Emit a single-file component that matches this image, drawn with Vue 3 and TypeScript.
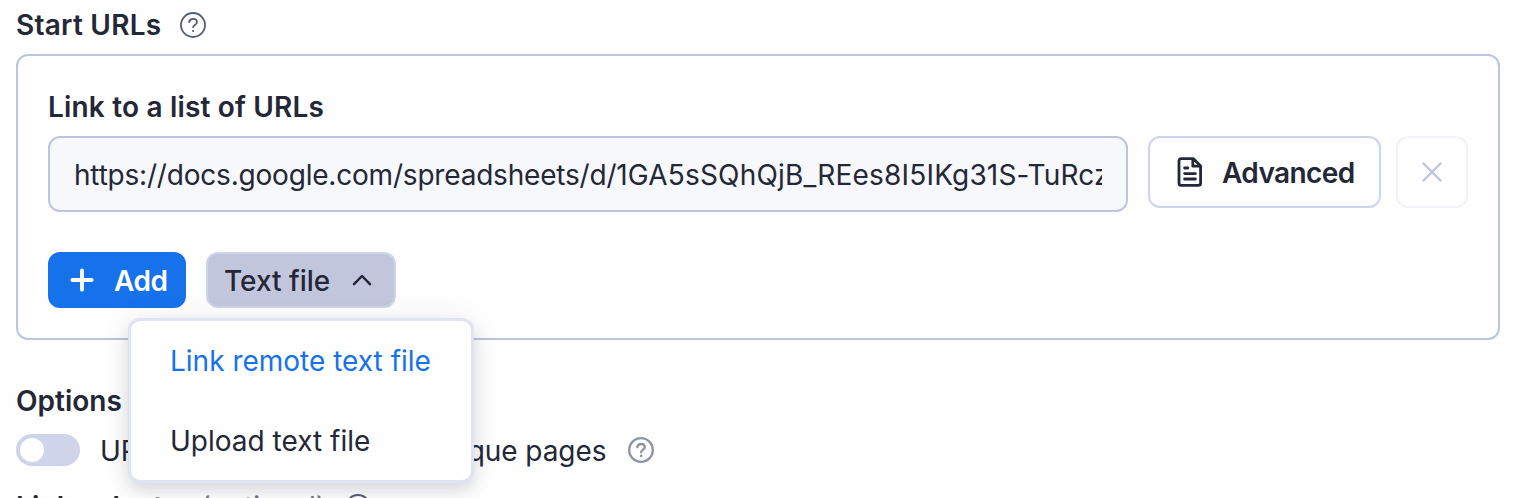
<script setup lang="ts">
import { ref } from 'vue'

const urlBase = 'https://docs.google.com/spreadsheets/d/'
const urlId = '1GA5sSQhQjB_REes8I5IKg31S-TuRczQ4'
const menuOpen = ref(true)
const fragments = ref(false)
const menuItems = [
  { label: 'Link remote text file', active: true },
  { label: 'Upload text file', active: false },
]
</script>

<template>
  <main class="form">
    <div class="heading start">
      <span>Start URLs</span>
      <svg class="help" viewBox="0 0 26 26"><circle cx="13" cy="13" r="12" /><path d="M9.2 10.2C9.5 8 11.1 6.9 13.1 6.9c2.2 0 3.8 1.3 3.8 3.3 0 2.6-3.8 2.8-3.8 5" /><circle class="dot" cx="13.1" cy="19" r="1.1" /></svg>
    </div>

    <section class="card">
      <div class="label">Link to a list of URLs</div>
      <div class="url-row">
        <div class="input"><span class="value"><span class="base">{{ urlBase }}</span><span class="id">{{ urlId }}</span></span></div>
        <button class="btn advanced">
          <svg class="doc" viewBox="0 0 26 32"><path d="M4.2 2.6H16.2l7.4 7.4v17.2a2.2 2.2 0 0 1-2.2 2.2H4.2A2.2 2.2 0 0 1 2 27.2V4.8a2.2 2.2 0 0 1 2.2-2.2ZM15.8 3v7.2h7.4M7.6 12h3.2M7.6 17.6h10.8M7.6 23h10.8" /></svg>
          <span>Advanced</span>
        </button>
        <button class="btn remove" disabled>
          <svg class="cross" viewBox="0 0 20 20"><path d="M1.5 1.5l17 17M18.5 1.5l-17 17" /></svg>
        </button>
      </div>
      <div class="actions">
        <button class="btn add">
          <svg class="plus" viewBox="0 0 24 24"><path d="M12 2.3v19.4M2.3 12h19.4" /></svg>
          <span>Add</span>
        </button>
        <button class="btn file" @click="menuOpen = !menuOpen">
          <span>Text file</span>
          <svg class="chevron" viewBox="0 0 20 12"><path d="M2 10.2l8-8.2 8 8.2" /></svg>
        </button>
      </div>
    </section>

    <div class="heading options">Options</div>
    <div class="toggle-row">
      <span class="toggle" :class="{ on: fragments }" @click="fragments = !fragments"><span class="knob" /></span>
      <span class="toggle-label">URL #fragments identify unique pages</span>
      <svg class="help muted" viewBox="0 0 26 26"><circle cx="13" cy="13" r="11.8" /><path d="M9.3 10.2C9.7 8.1 11.2 7 13.1 7c2.1 0 3.7 1.3 3.7 3.2 0 2.6-3.7 2.8-3.7 5.1" /><circle class="dot" cx="13.1" cy="18.9" r="1.3" /></svg>
    </div>
    <div class="heading selector">
      <span>Link selector</span>
      <span class="optional">(optional)</span>
      <svg class="help" viewBox="0 0 26 26"><circle cx="13" cy="13" r="12" /></svg>
    </div>

    <div v-if="menuOpen" class="menu">
      <div v-for="item in menuItems" :key="item.label" class="item" :class="{ active: item.active }">{{ item.label }}</div>
    </div>
  </main>
</template>

<style>
html,
body {
  overflow: hidden;
  background: #fefefe;
}
</style>

<style scoped>
.form {
  position: relative;
  box-sizing: border-box;
  height: 498px;
  padding: 0 20px 0 16px;
  overflow: hidden;
  color: #242736;
  font: 400 28px/40px Inter, 'Liberation Sans', sans-serif;
}
svg {
  flex: none;
  fill: none;
  stroke: currentColor;
  stroke-linecap: round;
  stroke-linejoin: round;
}
.heading,
.label {
  font-weight: 600;
  letter-spacing: 0.18px;
  white-space: nowrap;
}
.heading {
  display: flex;
  align-items: center;
}
.start {
  height: 50px;
  margin-bottom: 4px;
  letter-spacing: 0.25px;
}
.help {
  width: 26px;
  height: 26px;
  margin-left: 19px;
  color: #555b78;
  stroke-width: 1.8;
}
.help .dot {
  fill: currentColor;
  stroke: none;
}
.muted {
  margin-left: 22px;
  color: #8c93a3;
  stroke-width: 2.3;
}
.card {
  box-sizing: border-box;
  height: 286px;
  padding: 31px 30px 0;
  border: 2px solid #bec4de;
  border-radius: 12px;
}
.url-row {
  display: flex;
  margin-top: 9px;
}
.input {
  box-sizing: border-box;
  width: 1080px;
  height: 76px;
  padding: 17px 24px;
  border: 2px solid #bec4de;
  border-radius: 12px;
  background: #f6f8fc;
}
.value {
  display: block;
  overflow: hidden;
  white-space: nowrap;
}
.base {
  letter-spacing: -0.2px;
}
.id {
  letter-spacing: 0.18px;
}
.btn {
  display: flex;
  align-items: center;
  box-sizing: border-box;
  margin: 0;
  padding: 0;
  border: 2px solid #d0d4ea;
  border-radius: 12px;
  background: #fefefe;
  color: inherit;
  font: inherit;
  font-weight: 500;
  white-space: nowrap;
}
.btn span {
  padding-top: 2px;
}
.advanced {
  width: 233px;
  height: 72px;
  margin-left: 20px;
  padding-left: 27px;
  font-weight: 600;
  letter-spacing: -0.6px;
}
.doc {
  width: 26px;
  height: 32px;
  margin-right: 19px;
  stroke-width: 2.8;
}
.remove {
  justify-content: center;
  width: 72px;
  height: 72px;
  margin-left: 15px;
  border-color: #f1f1fa;
  color: #bec4de;
}
.cross {
  width: 20px;
  height: 20px;
  stroke-width: 2.4;
}
.actions {
  display: flex;
  gap: 20px;
  margin-top: 40px;
}
.actions .btn {
  height: 56px;
}
.add {
  width: 138px;
  padding-left: 20px;
  border-color: #1672eb;
  background: #1672eb;
  color: #fff;
  font-weight: 600;
  letter-spacing: -0.4px;
}
.plus {
  width: 24px;
  height: 24px;
  margin-right: 20px;
  stroke-width: 3.8;
}
.file {
  width: 190px;
  padding-left: 16px;
  background: #c1c6dd;
}
.chevron {
  width: 20px;
  height: 12px;
  margin-left: 22px;
  stroke-width: 2.5;
}
.options {
  margin-top: 41px;
  letter-spacing: 0;
}
.toggle-row {
  display: flex;
  align-items: center;
  height: 58px;
}
.toggle {
  box-sizing: border-box;
  width: 64px;
  height: 32px;
  margin-right: 20px;
  padding: 4px;
  border-radius: 16px;
  background: #d0d4ea;
}
.toggle.on {
  background: #1672eb;
}
.toggle-label {
  padding-top: 2px;
  letter-spacing: -0.07px;
}
.knob {
  display: block;
  width: 24px;
  height: 24px;
  border-radius: 50%;
  background: #fefefe;
}
.on .knob {
  margin-left: auto;
}
.toggle-row,
.item {
  white-space: nowrap;
}
.selector {
  margin-top: 8px;
}
.optional {
  margin-left: 9px;
  color: #6c7390;
  font-weight: 400;
  letter-spacing: -0.05px;
}
.menu {
  position: absolute;
  top: 318px;
  left: 128px;
  box-sizing: border-box;
  width: 346px;
  height: 165px;
  border: 3px solid #e0e3f3;
  border-radius: 12px;
  background: #fefefe;
  box-shadow: 0 8px 16px rgb(36 39 54 / 14%), 0 0 32px rgb(36 39 54 / 6%);
}
.item {
  height: 80px;
  padding-left: 39px;
  line-height: 80px;
}
.active {
  color: #1672eb;
}
</style>
